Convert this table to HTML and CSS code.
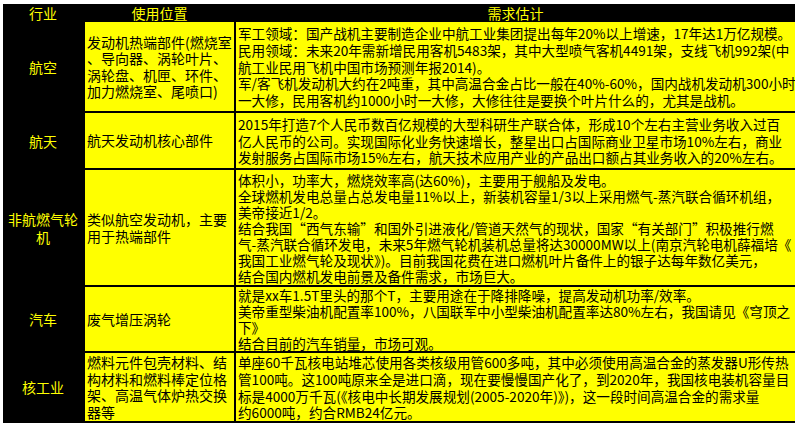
FILE: index.html
```html
<!DOCTYPE html>
<html lang="zh">
<head>
<meta charset="utf-8">
<title>高温合金需求估计</title>
<link rel="stylesheet" href="styles.css">
</head>
<body>
<div class="sheet">
  <div class="hd">行业</div>
  <div class="hd">使用位置</div>
  <div class="hd">需求估计</div>

  <div class="ind">航空</div>
  <div class="cell pos">
    <div class="ln">发动机热端部件(燃烧室</div>
    <div class="ln">、导向器、涡轮叶片、</div>
    <div class="ln">涡轮盘、机匣、环件、</div>
    <div class="ln">加力燃烧室、尾喷口)</div>
  </div>
  <div class="cell est roomy">
    <div class="ln">军工领域：国产战机主要制造企业中航工业集团提出每年20%以上增速，17年达1万亿规模。</div>
    <div class="ln">民用领域：未来20年需新增民用客机5483架，其中大型喷气客机4491架，支线飞机992架(中</div>
    <div class="ln">航工业民用飞机中国市场预测年报2014)。</div>
    <div class="ln">军/客飞机发动机大约在2吨重，其中高温合金占比一般在40%-60%，国内战机发动机300小时</div>
    <div class="ln">一大修，民用客机约1000小时一大修，大修往往是要换个叶片什么的，尤其是战机。</div>
  </div>

  <div class="ind">航天</div>
  <div class="cell pos">
    <div class="ln">航天发动机核心部件</div>
  </div>
  <div class="cell est roomy">
    <div class="ln">2015年打造7个人民币数百亿规模的大型科研生产联合体，形成10个左右主营业务收入过百</div>
    <div class="ln">亿人民币的公司。实现国际化业务快速增长，整星出口占国际商业卫星市场10%左右，商业</div>
    <div class="ln">发射服务占国际市场15%左右，航天技术应用产业的产品出口额占其业务收入的20%左右。</div>
  </div>

  <div class="ind"><div>非航燃气轮</div><div>机</div></div>
  <div class="cell pos">
    <div class="ln">类似航空发动机，主要</div>
    <div class="ln">用于热端部件</div>
  </div>
  <div class="cell est">
    <div class="ln">体积小，功率大，燃烧效率高(达60%)，主要用于舰船及发电。</div>
    <div class="ln">全球燃机发电总量占总发电量11%以上，新装机容量1/3以上采用燃气-蒸汽联合循环机组，</div>
    <div class="ln">美帝接近1/2。</div>
    <div class="ln">结合我国“西气东输”和国外引进液化/管道天然气的现状，国家“有关部门”积极推行燃</div>
    <div class="ln">气-蒸汽联合循环发电，未来5年燃气轮机装机总量将达30000MW以上(南京汽轮电机薛福培《</div>
    <div class="ln">我国工业燃气轮及现状》)。目前我国花费在进口燃机叶片备件上的银子达每年数亿美元，</div>
    <div class="ln">结合国内燃机发电前景及备件需求，市场巨大。</div>
  </div>

  <div class="ind">汽车</div>
  <div class="cell pos">
    <div class="ln">废气增压涡轮</div>
  </div>
  <div class="cell est">
    <div class="ln">就是xx车1.5T里头的那个T，主要用途在于降排降噪，提高发动机功率/效率。</div>
    <div class="ln">美帝重型柴油机配置率100%，八国联军中小型柴油机配置率达80%左右，我国请见《穹顶之</div>
    <div class="ln">下》</div>
    <div class="ln">结合目前的汽车销量，市场可观。</div>
  </div>

  <div class="ind">核工业</div>
  <div class="cell pos">
    <div class="ln">燃料元件包壳材料、结</div>
    <div class="ln">构材料和燃料棒定位格</div>
    <div class="ln">架、高温气体炉热交换</div>
    <div class="ln">器等</div>
  </div>
  <div class="cell est roomy">
    <div class="ln">单座60千瓦核电站堆芯使用各类核级用管600多吨，其中必须使用高温合金的蒸发器U形传热</div>
    <div class="ln">管100吨。这100吨原来全是进口滴，现在要慢慢国产化了，到2020年，我国核电装机容量目</div>
    <div class="ln">标是4000万千瓦(《核电中长期发展规划(2005-2020年)》)，这一段时间高温合金的需求量</div>
    <div class="ln">约6000吨，约合RMB24亿元。</div>
  </div>
</div>
</body>
</html>
```
FILE: styles.css
```css
html, body {
  margin: 0;
  padding: 0;
  background: #ffffff;
}

body {
  padding: 4px 3px 0 3px;
  font-family: "Noto Sans CJK SC", "Noto Sans", sans-serif;
  font-size: 14px;
  color: #000000;
}

.sheet {
  display: grid;
  grid-template-columns: 80px 149px 559px;
  grid-template-rows: 16px 89px 55px 115px 64px 68px;
  column-gap: 2px;
  row-gap: 2px;
  width: 790px;
  padding: 0 2px 2px 0;
  background: #000000;
}

.hd {
  display: flex;
  align-items: center;
  justify-content: center;
  color: #ffff00;
  line-height: 16px;
  background: #000000;
  height: 18px;
  margin-bottom: -2px;
}

.ind {
  display: flex;
  flex-direction: column;
  align-items: center;
  justify-content: center;
  color: #ffff00;
  background: #000000;
  line-height: 18px;
  text-align: center;
}

.cell {
  display: flex;
  flex-direction: column;
  justify-content: center;
  background: #ffff00;
  padding-left: 2px;
  line-height: 16.5px;
  overflow-x: clip;
  overflow-y: visible;
}

.ln {
  white-space: nowrap;
}

.est {
  font-size: 13.6px;
  line-height: 16px;
}

.est.roomy {
  line-height: 16.7px;
  padding-top: 1px;
}
```
